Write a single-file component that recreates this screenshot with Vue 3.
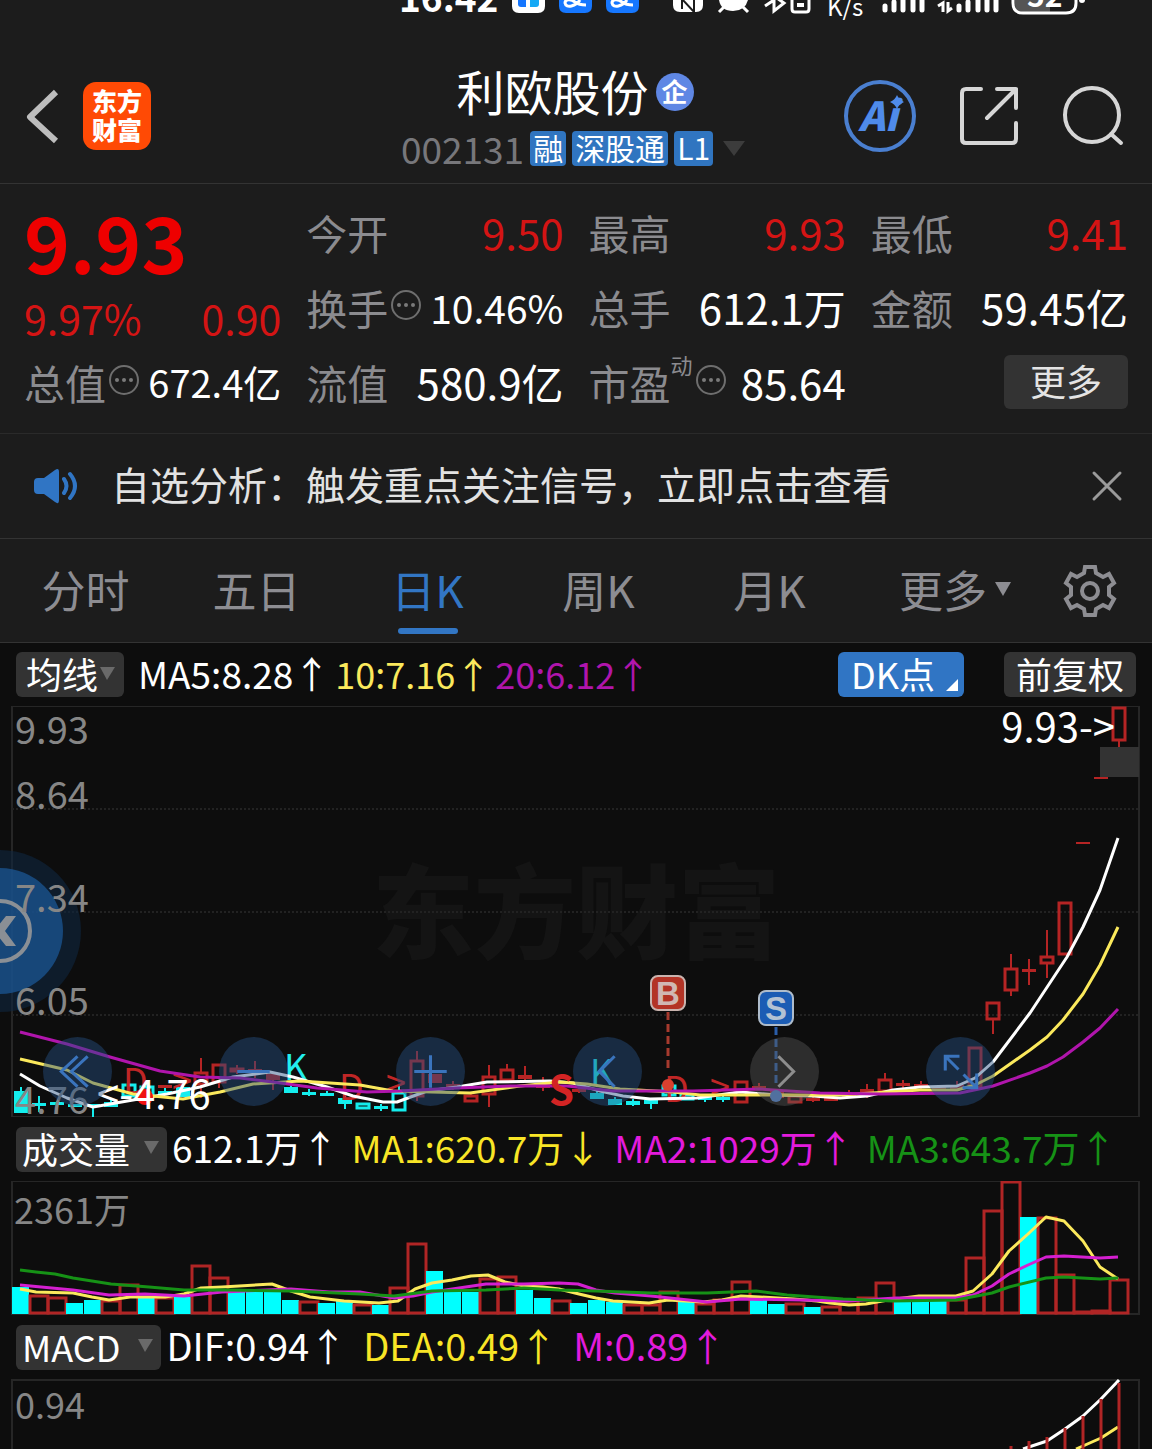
<script setup>
const tabs = ['分时', '五日', '日K', '周K', '月K']
const activeTab = '日K'

const stats = [
  { label: '今开', value: '9.50', tone: 'up' },
  { label: '最高', value: '9.93', tone: 'up' },
  { label: '最低', value: '9.41', tone: 'up' },
  { label: '换手', value: '10.46%', info: true, size: 'mid' },
  { label: '总手', value: '612.1万' },
  { label: '金额', value: '59.45亿' },
  { label: '总值', value: '672.4亿', info: true, size: 'small' },
  { label: '流值', value: '580.9亿' },
  { label: '市盈', sup: '动', value: '85.64', info: true },
]

// every trading day takes one 18-unit slot, the first centred at 21
const slot = (i) => 21 + 18 * i

// [day, body top, body bottom, wick top, wick bottom, style]
// r = hollow red, R = solid red, c = hollow cyan, C = solid cyan
const candles = [
  [0, 1092, 1112, 1087, 1113, 'C'], [1, 1104, 1105, 1096, 1112, 'C'],
  [2, 1103, 1104, 1101, 1106, 'C'], [3, 1105, 1106, 1104, 1106, 'C'],
  [4, 1105, 1106, 1105, 1118, 'C'], [5, 1103, 1106, 1099, 1107, 'C'],
  [6, 1085, 1096, 1085, 1096, 'c'], [7, 1087, 1094, 1083, 1096, 'c'],
  [8, 1086, 1087, 1085, 1087, 'R'], [8, 1092, 1093, 1088, 1095, 'C'],
  [9, 1088, 1096, 1084, 1097, 'C'], [10, 1073, 1084, 1058, 1098, 'r'],
  [11, 1065, 1082, 1065, 1088, 'r'], [12, 1069, 1071, 1065, 1074, 'r'],
  [13, 1070, 1071, 1061, 1078, 'R'], [14, 1075, 1079, 1073, 1090, 'R'],
  [15, 1088, 1092, 1084, 1093, 'C'], [16, 1093, 1094, 1089, 1096, 'C'],
  [17, 1094, 1095, 1091, 1096, 'C'], [18, 1099, 1103, 1096, 1109, 'C'],
  [19, 1104, 1108, 1104, 1108, 'c'], [20, 1107, 1108, 1104, 1111, 'C'],
  [21, 1093, 1110, 1086, 1110, 'c'], [22, 1061, 1096, 1051, 1101, 'r'],
  [23, 1075, 1082, 1074, 1082, 'R'], [24, 1085, 1086, 1081, 1090, 'R'],
  [25, 1096, 1101, 1092, 1102, 'r'], [26, 1077, 1094, 1065, 1107, 'r'],
  [27, 1070, 1080, 1064, 1082, 'r'], [28, 1076, 1078, 1066, 1081, 'R'],
  [29, 1085, 1087, 1077, 1091, 'R'], [31, 1090, 1091, 1086, 1093, 'R'],
  [32, 1094, 1098, 1091, 1098, 'C'], [33, 1100, 1104, 1097, 1105, 'C'],
  [34, 1102, 1104, 1099, 1106, 'C'], [35, 1101, 1103, 1100, 1109, 'C'],
  [36, 1086, 1095, 1084, 1097, 'c'], [37, 1095, 1099, 1095, 1099, 'c'],
  [38, 1098, 1099, 1095, 1102, 'C'], [39, 1098, 1099, 1095, 1102, 'C'],
  [40, 1082, 1102, 1082, 1103, 'r'], [41, 1087, 1089, 1083, 1090, 'R'],
  [42, 1091, 1097, 1090, 1100, 'R'], [43, 1096, 1102, 1096, 1102, 'r'],
  [44, 1099, 1100, 1095, 1102, 'R'], [45, 1099, 1100, 1096, 1100, 'R'],
  [46, 1094, 1096, 1090, 1097, 'R'], [47, 1090, 1091, 1084, 1098, 'R'],
  [48, 1080, 1091, 1073, 1092, 'r'], [49, 1084, 1085, 1080, 1088, 'R'],
  [50, 1085, 1086, 1081, 1090, 'R'], [51, 1088, 1089, 1086, 1090, 'R'],
  [52, 1086, 1088, 1081, 1090, 'R'], [53, 1048, 1087, 1047, 1087, 'r'],
  [54, 1003, 1019, 1003, 1034, 'r'], [55, 969, 990, 954, 996, 'r'],
  [56, 970, 971, 959, 985, 'R'], [57, 957, 963, 930, 978, 'r'],
  [58, 903, 954, 903, 954, 'r'], [59, 843, 843, 842, 844, 'R'],
  [60, 778, 778, 777, 779, 'R'], [61, 708, 740, 707, 747, 'r'],
]

const priceMa = [
  { tone: 'white', points: '20,1074 40,1086 67,1098 93,1107 133,1100 167,1094 200,1087 233,1077 270,1072 293,1077 327,1087 353,1096 383,1102 397,1102 427,1091 457,1087 487,1082 550,1081 573,1083 600,1091 623,1096 650,1099 697,1098 740,1092 777,1095 813,1096 840,1098 867,1096 893,1090 920,1087 957,1086 975,1078 993,1062 1030,1013 1067,957 1083,927 1100,890 1118,838' },
  { tone: 'yellow', points: '20,1059 67,1070 93,1083 133,1094 183,1099 220,1092 253,1084 300,1081 360,1085 393,1091 470,1093 520,1086 560,1082 587,1084 620,1089 673,1092 700,1095 820,1095 840,1095 920,1090 957,1090 975,1085 993,1076 1030,1050 1047,1037 1063,1020 1083,994 1100,965 1118,927' },
  { tone: 'purple', points: '20,1032 67,1044 110,1057 160,1071 200,1077 240,1078 273,1082 317,1088 367,1092 400,1091 457,1088 510,1086 567,1086 613,1091 693,1091 760,1089 820,1093 880,1094 960,1093 993,1086 1030,1073 1047,1066 1063,1057 1083,1042 1100,1028 1118,1009' },
]

const axis = [
  { text: '9.93', y: 744 },
  { text: '8.64', y: 809 },
  { text: '7.34', y: 912 },
  { text: '6.05', y: 1015 },
  { text: '4.76', y: 1114 },
]

// bar tops; a trailing flag of 1 marks a falling day
const volumes = [
  [1287, 1], [1296], [1298], [1303, 1], [1300, 1], [1301], [1285], [1297, 1],
  [1298], [1297, 1], [1266], [1278], [1292, 1], [1292, 1], [1292, 1], [1300, 1],
  [1302], [1303, 1], [1301, 1], [1305], [1305, 1], [1288], [1244], [1271, 1],
  [1292, 1], [1292, 1], [1279], [1277], [1290, 1], [1298, 1], [1301], [1303, 1],
  [1300, 1], [1302, 1], [1305], [1305], [1292], [1302, 1], [1304], [1300],
  [1282], [1300, 1], [1304, 1], [1304], [1307, 1], [1307], [1304], [1298],
  [1283], [1301, 1], [1301, 1], [1301, 1], [1300], [1258], [1211], [1182],
  [1217, 1], [1218], [1275], [1312], [1311], [1280],
]

const volumeMa = [
  { tone: 'yellow', points: '20,1289 36,1292 73,1293 92,1297 109,1300 130,1297 165,1297 184,1294 201,1288 222,1287 272,1284 291,1291 310,1297 344,1301 379,1303 398,1301 415,1289 432,1283 452,1280 471,1276 488,1275 505,1282 524,1286 543,1287 559,1289 579,1294 596,1298 613,1301 649,1303 668,1300 703,1302 722,1300 741,1296 760,1297 794,1299 817,1301 830,1303 849,1305 866,1304 888,1300 919,1296 956,1296 973,1291 992,1274 1009,1251 1028,1234 1046,1217 1064,1221 1083,1241 1100,1267 1118,1279' },
  { tone: 'magenta', points: '20,1285 73,1290 109,1295 145,1294 184,1296 222,1292 291,1289 329,1292 360,1292 394,1298 413,1296 432,1292 486,1284 524,1284 559,1283 578,1284 596,1290 615,1293 651,1296 707,1302 741,1299 802,1300 847,1301 896,1298 956,1298 973,1295 992,1286 1009,1274 1028,1265 1046,1257 1064,1256 1100,1258 1118,1257' },
  { tone: 'green', points: '20,1270 36,1272 55,1274 73,1278 111,1284 149,1287 184,1290 230,1290 291,1291 360,1294 394,1296 432,1291 486,1290 524,1288 559,1290 596,1291 651,1293 707,1293 756,1291 787,1295 843,1299 892,1301 956,1300 992,1293 1009,1287 1046,1278 1064,1277 1100,1279 1118,1278' },
]

const macdBars = [[55, 1446], [56, 1441], [57, 1437], [58, 1428], [59, 1416], [60, 1399], [61, 1383]]
</script>

<template>
  <div class="page">
    <svg class="status" viewBox="400 0 752 20" width="752" height="20" aria-label="16:42">
      <text class="clock" x="399" y="12">16:42</text>
      <path d="M512 0H545V6Q545 13 538 13H519Q512 13 512 6Z" fill="#fff" />
      <path d="M518 0H526V7H521Q518 7 518 4Z" fill="#1677ff" />
      <path d="M530 0H539V4Q539 7 536 7H530Z" fill="#14a9f5" />
      <g v-for="x in [559, 606]" :key="x">
        <path :d="`M${x} 0h33v6q0 7-7 7h-19q-7 0-7-7z`" fill="#1677ff" />
        <path :d="`M${x + 21} 0c-4 6-14 9-15 3c0-4 6-4 10-1s8 3 11 3`" fill="none" stroke="#fff" stroke-width="3" />
      </g>
      <path d="M673 0H703V5Q703 12 696 12H680Q673 12 673 5Z" fill="#fff" />
      <path d="M682 9V-1L694 12V-1" fill="none" stroke="#1c1c1c" stroke-width="2" />
      <path d="M719 0H748Q745 11 733 11T719 0Z" fill="#fff" />
      <path d="M724 7L719 12M743 7L748 12M740 0L734 5" stroke="#fff" stroke-width="3" />
      <path d="M765 6L774 0M774 -4V11L784 3L774 -4" fill="none" stroke="#fff" stroke-width="3" />
      <path d="M792 0V9Q792 12 795 12H806Q809 12 809 9V0" fill="none" stroke="#fff" stroke-width="3" />
      <path d="M797 5H804" stroke="#fff" stroke-width="4" />
      <text class="speed" x="827" y="16">K/s</text>
      <g stroke="#fff" stroke-width="5" stroke-linecap="round">
        <path d="M885 6V10M894 2V10M903 0V10M913 0V10M922 0V10" />
        <path d="M959 6V10M968 2V10M978 0V10M987 0V10M996 0V10" />
      </g>
      <path d="M938 6L943 3V12M952 8L948 11V2" fill="none" stroke="#fff" stroke-width="3" />
      <path d="M1015 0H1050V12H1022Q1015 12 1015 4Z" fill="#555" />
      <path d="M1013 0V3Q1013 13 1023 13H1066Q1076 13 1076 3V0" fill="none" stroke="#fff" stroke-width="3" />
      <text class="charge" x="1027" y="7">52</text>
      <circle cx="1082" cy="0" r="3" fill="#fff" />
    </svg>

    <header class="head">
      <div class="head-left">
        <button class="plain" aria-label="返回">
          <svg width="34" height="56" viewBox="0 0 34 56"><path d="M30 4L4 29L30 53" fill="none" stroke="#bdbdbd" stroke-width="6" stroke-linejoin="round" /></svg>
        </button>
        <a class="brand" href="#"><span>东方</span><span>财富</span></a>
      </div>
      <div class="head-title">
        <h1>利欧股份<span class="corp">企</span></h1>
        <div class="code-row">
          <span class="code">002131</span>
          <span class="tag">融</span><span class="tag">深股通</span><span class="tag">L1</span>
          <svg class="caret" width="22" height="15" viewBox="0 0 22 15"><path d="M0 0H22L11 15Z" fill="#3c3c3c" /></svg>
        </div>
      </div>
      <div class="head-right">
        <button class="plain ai" aria-label="Ai">
          <span>Ai</span>
          <svg class="spark" width="14" height="14" viewBox="0 0 14 14"><path d="M7 0Q9 5 14 7Q9 9 7 14Q5 9 0 7Q5 5 7 0Z" fill="#4f8bea" /></svg>
        </button>
        <button class="plain" aria-label="分享">
          <svg width="60" height="60" viewBox="0 0 60 60" fill="none" stroke="#d6d6d6" stroke-width="4" stroke-linecap="round" stroke-linejoin="round"><path d="M22 3H7Q3 3 3 7V53Q3 57 7 57H53Q57 57 57 53V37M38 3H57V22M57 3L28 32" /></svg>
        </button>
        <button class="plain" aria-label="搜索">
          <svg width="62" height="62" viewBox="0 0 62 62" fill="none" stroke="#d6d6d6" stroke-width="4" stroke-linecap="round"><circle cx="30" cy="30" r="27" /><path d="M49 49L59 58" /></svg>
        </button>
      </div>
    </header>

    <section class="quote">
      <div class="price">
        <strong>9.93</strong>
        <div class="change"><span>9.97%</span><span>0.90</span></div>
      </div>
      <div v-for="s in stats" :key="s.label" class="stat">
        <span class="label">{{ s.label }}<sup v-if="s.sup">{{ s.sup }}</sup></span>
        <svg v-if="s.info" class="info" width="32" height="32" viewBox="0 0 32 32">
          <circle cx="16" cy="16" r="14" fill="none" stroke="#6e6e6e" stroke-width="2" />
          <g fill="#7a7a7a"><circle cx="9" cy="16" r="2" /><circle cx="16" cy="16" r="2" /><circle cx="23" cy="16" r="2" /></g>
        </svg>
        <span class="value" :class="[s.tone, s.size]">{{ s.value }}</span>
      </div>
      <div class="stat"><button class="more">更多</button></div>
    </section>

    <section class="notice">
      <svg width="46" height="38" viewBox="0 0 46 38">
        <path d="M5 11H11L22 3Q26 0 26 5V33Q26 38 22 35L11 27H5Q1 27 1 23V15Q1 11 5 11Z" fill="#3075c4" />
        <path d="M31 12Q36 19 31 26M37 7Q47 19 37 31" fill="none" stroke="#3075c4" stroke-width="4" stroke-linecap="round" />
      </svg>
      <p>自选分析：触发重点关注信号，立即点击查看</p>
      <button class="plain" aria-label="关闭">
        <svg width="32" height="32" viewBox="0 0 32 32"><path d="M3 3L29 29M29 3L3 29" stroke="#9a9a9a" stroke-width="3" stroke-linecap="round" /></svg>
      </button>
    </section>

    <nav class="tabs">
      <button v-for="t in tabs" :key="t" class="tab" :class="{ active: t === activeTab }">{{ t }}</button>
      <button class="tab tab-more">更多
        <svg width="16" height="14" viewBox="0 0 16 14"><path d="M0 0H16L8 14Z" fill="#8d8d92" /></svg>
      </button>
      <button class="plain gear" aria-label="设置">
        <svg width="54" height="54" viewBox="0 0 54 54" fill="none" stroke="#8d8d92" stroke-width="4">
          <path d="M22 3H32L33 9L40 13L46 10L51 19L46 23V31L51 35L46 44L40 41L33 45L32 51H22L21 45L14 41L8 44L3 35L8 31V23L3 19L8 10L14 13L21 9Z" />
          <circle cx="27" cy="27" r="8" />
        </svg>
      </button>
    </nav>

    <section class="charts">
      <div class="legend ma-legend">
        <button class="chip">均线<svg width="15" height="13" viewBox="0 0 15 13"><path d="M0 0H15L7 13Z" fill="#6a6a6a" /></svg></button>
        <span class="white">MA5:8.28↑</span>
        <span class="yellow">10:7.16↑</span>
        <span class="purple">20:6.12↑</span>
        <button class="chip dk">DK点<svg width="12" height="12" viewBox="0 0 12 12"><path d="M12 0V12H0Z" fill="#fff" /></svg></button>
        <button class="chip adjust">前复权</button>
      </div>

      <div class="kline">
        <svg class="plot" viewBox="0 706 1152 411">
          <text class="watermark" x="576" y="951">东方财富</text>
          <path class="frame" d="M12 706H1139V1117H12Z" />
          <path class="grid" d="M12 809H1139M12 912H1139M12 1015H1139" />
          <rect x="1100" y="747" width="39" height="30" fill="#333" />
          <g v-for="(c, n) in candles" :key="n" :class="'k-' + c[5]">
            <path :d="`M${slot(c[0])} ${c[3]}V${c[1]}M${slot(c[0])} ${c[2]}V${c[4]}`" />
            <path v-if="c[1] === c[2]" :d="`M${slot(c[0]) - 7} ${c[1]}h14`" />
            <rect v-else :x="slot(c[0]) - 6" :y="c[1]" width="12" :height="c[2] - c[1]" />
          </g>
          <g class="dk-mark">
            <text x="123" y="1094">D</text><text x="172" y="1094">&gt;</text>
            <text x="339" y="1100">D</text><text x="386" y="1096">&gt;</text>
            <text x="664" y="1102">D</text><text x="710" y="1100">&gt;</text>
            <g class="cyan"><text x="284" y="1080">K</text><text x="590" y="1085">K</text></g>
          </g>
          <polyline v-for="l in priceMa" :key="l.tone" class="line" :class="l.tone" :points="l.points" />
          <text class="sell" x="549" y="1105">S</text>
          <circle cx="145" cy="1097" r="8" fill="#f01010" />
          <path d="M668 1012V1070" stroke="#a63a2e" stroke-width="3" stroke-dasharray="8 4" />
          <path d="M776 1027V1085" stroke="#2a5da8" stroke-width="3" stroke-dasharray="8 4" />
          <circle cx="668" cy="1085" r="6" fill="#d8402f" />
          <circle cx="776" cy="1096" r="6" fill="#4a80d0" />
          <rect x="651" y="976" width="34" height="34" rx="7" fill="#b33426" stroke="#c9b3ae" stroke-width="2" />
          <rect x="759" y="991" width="34" height="34" rx="7" fill="#1b5cb4" stroke="#aebccb" stroke-width="2" />
          <text class="badge" x="668" y="1005" fill="#d0b8b3">B</text>
          <text class="badge" x="776" y="1020" fill="#b4c2d3">S</text>
          <circle cx="0" cy="931" r="81" fill="#0f2740" opacity="0.6" />
          <circle cx="0" cy="931" r="63" fill="#1b5a9b" opacity="0.7" />
          <circle cx="0" cy="931" r="30" fill="none" stroke="#8a8f95" stroke-width="4" />
          <path d="M-6 931L6 916H16L5 931L16 946H6Z" fill="#8a8f95" />
          <text v-for="a in axis" :key="a.text" class="axis" x="15" :y="a.y">{{ a.text }}</text>
          <text class="edge" x="97" y="1109">&lt;-4.76</text>
          <text class="edge" x="1115" y="742" text-anchor="end">9.93-&gt;</text>
        </svg>
        <div class="pad">
          <button aria-label="最左"><svg viewBox="0 0 68 68"><path d="M34 19L18 34L34 49M44 19L28 34L44 49" /></svg></button>
          <button aria-label="缩小"><svg viewBox="0 0 68 68"><path d="M18 34H50" /></svg></button>
          <button aria-label="放大"><svg viewBox="0 0 68 68"><path d="M18 34H50M34 18V50" /></svg></button>
          <button aria-label="左移"><svg viewBox="0 0 68 68"><path d="M41 19L26 34L41 49" /></svg></button>
          <button class="grey" aria-label="右移"><svg viewBox="0 0 68 68"><path d="M28 19L43 34L28 49" /></svg></button>
          <button aria-label="全屏"><svg viewBox="0 0 68 68"><path d="M19 33V19H33M19 19L32 32M37 37L50 50M50 36V50H36" /></svg></button>
        </div>
      </div>

      <div class="legend vol-legend">
        <button class="chip">成交量<svg width="15" height="13" viewBox="0 0 15 13"><path d="M0 0H15L7 13Z" fill="#6a6a6a" /></svg></button>
        <span class="white">612.1万↑</span>
        <span class="vyellow">MA1:620.7万↓</span>
        <span class="magenta">MA2:1029万↑</span>
        <span class="green">MA3:643.7万↑</span>
      </div>
      <svg class="plot" viewBox="0 1181 1152 134">
        <path class="frame" d="M12 1181H1139V1314H12Z" />
        <g v-for="(v, i) in volumes" :key="i">
          <rect v-if="v[1]" :x="slot(i) - 9" :y="v[0]" width="17" :height="1314 - v[0]" fill="#00ffff" />
          <rect v-else :x="slot(i) - 9" :y="v[0]" width="18" :height="1313 - v[0]" fill="none" stroke="#b02525" stroke-width="3" />
        </g>
        <polyline v-for="l in volumeMa" :key="l.tone" class="line" :class="l.tone" :points="l.points" />
        <text class="axis small" x="14" y="1224">2361万</text>
      </svg>

      <div class="legend macd-legend">
        <button class="chip">MACD<svg width="15" height="13" viewBox="0 0 15 13"><path d="M0 0H15L7 13Z" fill="#6a6a6a" /></svg></button>
        <span class="white">DIF:0.94↑</span>
        <span class="vyellow">DEA:0.49↑</span>
        <span class="magenta">M:0.89↑</span>
      </div>
      <svg class="plot" viewBox="0 1379 1152 70">
        <path class="frame" d="M12 1449V1380H1139V1449" />
        <polyline class="line white" points="1023,1449 1047,1441 1065,1429 1083,1416 1101,1399 1119,1380" />
        <polyline class="line yellow" points="1076,1449 1101,1438 1118,1427" />
        <path v-for="b in macdBars" :key="b[0]" :d="`M${slot(b[0])} ${b[1]}V1449`" stroke="#b02525" stroke-width="3" />
        <text class="axis small" x="15" y="1419">0.94</text>
      </svg>
    </section>
  </div>
</template>

<style>
body { margin: 0; background: #0d0d0d; }
</style>

<style scoped>
.page { font-family: "Noto Sans CJK SC", sans-serif; color: #fff; background: #1c1c1c; }
button { font: inherit; color: inherit; border: 0; margin: 0; padding: 0; background: none; cursor: pointer; }
svg { display: block; flex: none; }
.plain { display: flex; align-items: center; }

.status { margin-left: auto; }
.clock { font: 700 37px "Noto Sans CJK SC", sans-serif; fill: #fff; }
.speed { font: 24px "Noto Sans CJK SC", sans-serif; fill: #fff; }
.charge { font: 700 30px "Noto Sans CJK SC", sans-serif; fill: #fff; }

.head { display: grid; grid-template-columns: 1fr auto 1fr; align-items: center; box-sizing: border-box; min-height: 164px; padding: 28px 28px 0 26px; border-bottom: 1px solid #333; }
.head-left { display: flex; align-items: center; gap: 23px; }
.brand { display: flex; flex-direction: column; align-items: center; justify-content: center; width: 68px; height: 68px; padding-bottom: 2px; box-sizing: border-box; border-radius: 13px; background: #ff4a05; color: #fff; text-decoration: none; font-weight: 900; font-size: 25px; line-height: 29px; }
.head-title { display: flex; flex-direction: column; align-items: center; gap: 12px; padding-bottom: 2px; }
h1 { display: flex; align-items: center; gap: 7px; margin: 0; font-size: 48px; font-weight: 400; line-height: 56px; }
.corp { width: 38px; height: 38px; margin-top: 4px; border-radius: 50%; background: #5f87e4; font-size: 26px; font-weight: 700; line-height: 35px; text-align: center; }
.code-row { display: flex; align-items: center; gap: 6px; }
.code { color: #77777b; font-size: 37px; line-height: 36px; padding-bottom: 2px; }
.tag { height: 35px; padding: 0 3px; border-radius: 4px; background: #3075c0; font-size: 30px; line-height: 32px; }
.caret { margin: 0 4px; }
.head-right { display: flex; align-items: center; justify-content: flex-end; gap: 43px; }
.ai { position: relative; width: 72px; height: 72px; box-sizing: border-box; border: 4px solid #4a7fd0; border-radius: 50%; color: #4f8bea; font-size: 40px; font-weight: 900; font-style: italic; line-height: 56px; justify-content: center; padding: 0 4px 4px 0; }
.spark { position: absolute; top: 11px; right: 8px; }

.quote { display: grid; grid-template-columns: repeat(4, 1fr); grid-auto-rows: 75px; column-gap: 25px; padding: 10px 24px 14px; border-bottom: 1px solid #2a2a2a; }
.price { grid-row: span 2; color: #ee0000; }
.price strong { display: block; font-size: 78px; line-height: 92px; }
.change { display: flex; justify-content: space-between; color: #d41414; font-size: 41px; line-height: 62px; }
.stat { display: flex; align-items: center; font-size: 42px; white-space: nowrap; }
.label { position: relative; color: #8b8b8f; font-size: 41px; }
.label sup { position: absolute; left: 100%; top: -4px; font-size: 22px; line-height: 32px; }
.info { margin: 0 0 4px 2px; }
.label:has(sup) + .info { margin-left: 24px; }
.value { margin-left: auto; }
.up { color: #d41414; }
.mid { font-size: 39px; }
.small { font-size: 38px; }
.more { width: 124px; height: 54px; margin-left: auto; padding-bottom: 4px; border-radius: 6px; background: #333; color: #e4e4e4; font-size: 36px; line-height: 48px; }

.notice { display: flex; align-items: center; min-height: 104px; padding: 0 29px 0 33px; border-bottom: 1px solid #333; }
.notice p { flex: 1; margin: 0 0 6px 32px; color: #e2e2e2; font-size: 39px; line-height: 56px; }

.tabs { display: grid; grid-template-columns: repeat(5, 171fr) 200fr 97fr; min-height: 103px; border-bottom: 1px solid #333; color: #8d8d92; }
.tab { position: relative; padding-bottom: 4px; font-size: 44px; line-height: 60px; }
.active { color: #3276c4; }
.active::after { content: ""; position: absolute; left: 50%; bottom: 8px; width: 60px; height: 6px; margin-left: -30px; border-radius: 3px; background: #3276c4; }
.tab-more { display: flex; align-items: center; justify-content: center; gap: 8px; }
.gear { padding-left: 8px; }

.charts { background: #0d0d0d; }
.legend { display: flex; align-items: center; box-sizing: border-box; padding: 0 16px; white-space: nowrap; }
.legend span { padding-bottom: 4px; line-height: 48px; }
.chip { display: flex; align-items: center; height: 45px; border-radius: 6px; background: #333; color: #fff; font-size: 36px; line-height: 40px; padding-bottom: 3px; }
.ma-legend { min-height: 63px; font-size: 36px; }
.ma-legend .chip { padding: 0 9px 3px 10px; gap: 2px; margin-right: 14px; }
.ma-legend .white { font-size: 37px; margin-right: 5px; }
.ma-legend .yellow { margin-right: 4px; }
.ma-legend .dk { margin: 0 40px 0 auto; padding: 0 6px 3px 13px; gap: 11px; background: #3075c4; }
.dk svg { align-self: flex-end; margin-bottom: 3px; }
.ma-legend .adjust { margin: 0; padding: 0 12px 3px; }
.vol-legend, .macd-legend { min-height: 64px; font-size: 37px; }
.vol-legend .chip, .macd-legend .chip { padding: 0 8px 3px 6px; gap: 14px; margin-right: 5px; }
.vol-legend span { margin-right: 13px; }
.macd-legend { font-size: 38px; }
.macd-legend .chip { gap: 18px; }
.macd-legend span { margin-right: 16px; }
.white { color: #fff; stroke: #fff; }
.yellow { color: #fbe95c; stroke: #fbe95c; }
.vyellow { color: #f8e526; }
.purple { color: #b015ac; stroke: #b015ac; }
.magenta { color: #e31bdc; stroke: #d41fd0; }
.green { color: #169216; stroke: #169216; }

.plot { width: 100%; height: auto; overflow: hidden; }
.frame { fill: none; stroke: #262626; stroke-width: 2; }
.grid { stroke: #222; stroke-width: 2; stroke-dasharray: 2 2; }
.line { fill: none; stroke-width: 3; stroke-linejoin: round; }
.k-r, .k-R { stroke: #b52424; fill: none; stroke-width: 2; }
.k-R { fill: #b52424; }
.k-c, .k-C { stroke: #14eded; fill: none; stroke-width: 2; }
.k-C { fill: #14eded; }
.k-r rect, .k-c rect { stroke-width: 3; }
.watermark { font-size: 102px; font-weight: 900; fill: #141414; text-anchor: middle; }
.axis { font-size: 38px; fill: #868686; }
.axis.small { font-size: 36px; }
.edge { font-size: 40px; fill: #fff; }
.dk-mark { font-size: 36px; fill: #c02626; }
.sell { font-size: 40px; font-weight: 700; fill: #d32424; }
.cyan { fill: #22eeee; }
.badge { font: 700 33px "Liberation Sans", sans-serif; text-anchor: middle; }

.kline { position: relative; }
.pad { position: absolute; left: 3.7%; right: 13.6%; bottom: 11px; display: flex; justify-content: space-between; }
.pad button { width: 69px; height: 69px; border-radius: 50%; background: rgba(37, 80, 130, 0.45); }
.pad svg { width: 69px; height: 69px; fill: none; stroke: #3a74bd; stroke-width: 3; }
.pad .grey { background: rgba(90, 90, 90, 0.42); }
.pad .grey svg { stroke: #8d8d8d; }
</style>
